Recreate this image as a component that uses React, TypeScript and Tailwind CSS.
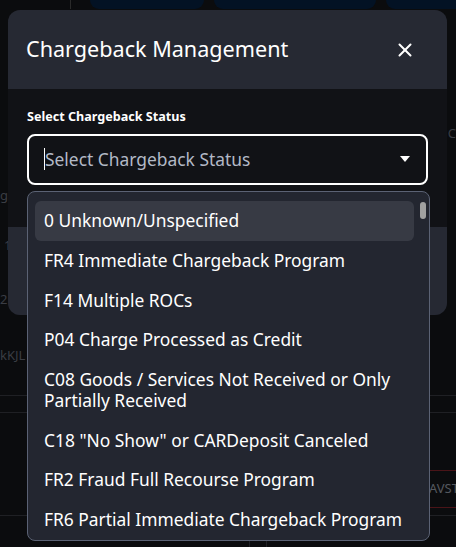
import { X } from "lucide-react";

const options = [
  "0 Unknown/Unspecified",
  "FR4 Immediate Chargeback Program",
  "F14 Multiple ROCs",
  "P04 Charge Processed as Credit",
  "C08 Goods / Services Not Received or Only Partially Received",
  'C18 "No Show" or CARDeposit Canceled',
  "FR2 Fraud Full Recourse Program",
  "FR6 Partial Immediate Chargeback Program",
];

// the page behind the dimmed overlay
function Backdrop() {
  return (
    <div className="absolute inset-0 flex flex-col text-[13px] leading-[18px] text-[#3a3d44]">
      <div className="flex h-[9px] shrink-0">
        <div className="w-[71px] border-r border-[#2a2a2a]" />
        <div className="w-[19px]" />
        <div className="flex flex-1 gap-[10px]">
          <div className="w-[114px] rounded-b-[10px] bg-[#031224]" />
          <div className="w-[162px] rounded-b-[10px] bg-[#031224]" />
          <div className="flex-1 rounded-bl-[10px] bg-[#031224]" />
        </div>
      </div>
      <div className="flex h-[386px] shrink-0 justify-between">
        <div className="flex flex-col pt-[177px]">
          <span>gr</span>
          <span className="mt-[32px] pl-[4px]">1</span>
          <span className="mt-[36px]">2</span>
          <span className="mt-[38px]">kKJL</span>
        </div>
        <div className="pt-[115px]">
          <span>C</span>
        </div>
      </div>
      <div className="h-[18px] shrink-0 border-y border-[#1f2024]" />
      <div className="flex h-[102px] shrink-0 justify-end pt-[57px]">
        <div className="h-[38px] w-[27px] overflow-hidden border-y border-[#4a1418] pt-[8px] text-[#55585e]">
          AVST
        </div>
      </div>
      <div className="flex flex-1 border-t border-[#1f2024] pl-[249px]">
        <div className="w-[18px] border-x border-[#1f2024]" />
      </div>
    </div>
  );
}

export default function App() {
  return (
    <div
      className="relative h-[547px] w-[456px] overflow-hidden bg-[#0b0c0e]"
      style={{ fontFamily: '"Noto Sans", "Open Sans", sans-serif' }}
    >
      <Backdrop />

      <div className="absolute left-[8px] top-[10px] flex h-[305px] w-[439px] flex-col overflow-hidden rounded-[12px] bg-[#111216]">
        <div className="flex h-[79px] items-center justify-between bg-[#262933] pl-[18px] pr-[31px]">
          <h2 className="text-[21.6px] text-white">Chargeback Management</h2>
          <X className="h-[22px] w-[22px] text-white" strokeWidth={2.2} />
        </div>
        <div className="px-[19px] pt-[19px]">
          <label className="block text-[12.6px] font-bold text-white">Select Chargeback Status</label>
          <div className="mt-[7px] flex h-[51px] items-center justify-between rounded-[8px] border-2 border-white pl-[15px] pr-[16px]">
            <div className="flex items-center">
              <span className="h-[22px] w-px bg-white" />
              <span className="text-[17.4px] text-[#b3b9c6]">Select Chargeback Status</span>
            </div>
            <svg width="10" height="6" viewBox="0 0 10 6">
              <path d="M0 0h10L5 6z" fill="#fff" />
            </svg>
          </div>
        </div>
        <div className="mt-auto h-[88px] bg-[#262933]" />
      </div>

      <div className="absolute left-[27px] top-[191px] h-[350px] w-[403px] overflow-hidden rounded-[8px] border border-[#5b6274] bg-[#232630]">
        <div className="absolute right-[3px] top-[10px] h-[17px] w-[6px] rounded-full bg-[#a0a0a0]" />
        <ul className="flex flex-col pl-[7px] pr-[15px] pt-[9px] text-[17.4px] leading-[21px] text-white">
          {options.map((o, i) => (
            <li
              key={o}
              className={`rounded-[6px] px-[9px] py-[9.35px] ${i === 0 ? "bg-[#373a44]" : ""}`}
            >
              {o}
            </li>
          ))}
        </ul>
      </div>
    </div>
  );
}
